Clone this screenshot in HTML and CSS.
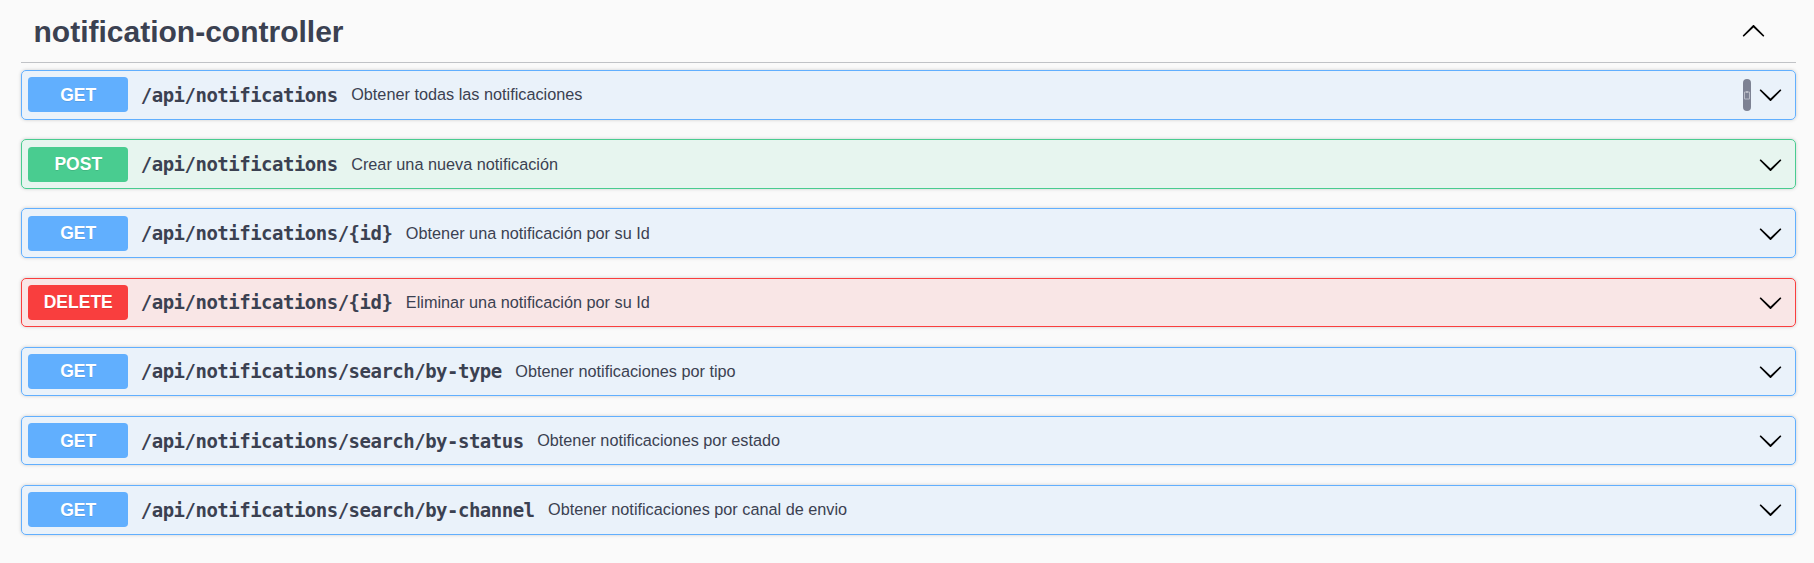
FILE: index.html
```html
<!DOCTYPE html>
<html lang="es">
<head>
<meta charset="utf-8">
<title>notification-controller</title>
<link rel="stylesheet" href="styles.css">
</head>
<body>
<div class="wrapper">
  <div class="tag">
    <h3 class="tag-title">notification-controller</h3>
    <svg class="tag-arrow" viewBox="0 0 20 20" width="25" height="25"><path d="M17.418 6.109c.272-.268.709-.268.979 0s.271.701 0 .969l-7.908 7.83c-.27.268-.707.268-.979 0l-7.908-7.83c-.27-.268-.27-.701 0-.969.271-.268.709-.268.979 0L10 13.25l7.418-7.141z"/></svg>
  </div>

  <div class="opblock get">
    <span class="method">GET</span>
    <span class="path">/api/notifications</span>
    <span class="desc">Obtener todas las notificaciones</span>
    <span class="copy"><svg viewBox="0 0 8 10" width="8" height="10"><path d="M1.5 2h5v7h-5z" fill="none" stroke="#b8bbc5" stroke-width="1"/><path d="M3 1h2v2H3z" fill="#b8bbc5"/></svg></span>
    <svg class="arrow" viewBox="0 0 20 20" width="25" height="25"><path d="M17.418 6.109c.272-.268.709-.268.979 0s.271.701 0 .969l-7.908 7.83c-.27.268-.707.268-.979 0l-7.908-7.830c-.27-.268-.27-.701 0-.969.271-.268.709-.268.979 0L10 13.25l7.418-7.141z"/></svg>
  </div>

  <div class="opblock post">
    <span class="method">POST</span>
    <span class="path">/api/notifications</span>
    <span class="desc">Crear una nueva notificación</span>
    <svg class="arrow" viewBox="0 0 20 20" width="25" height="25"><path d="M17.418 6.109c.272-.268.709-.268.979 0s.271.701 0 .969l-7.908 7.83c-.27.268-.707.268-.979 0l-7.908-7.83c-.27-.268-.27-.701 0-.969.271-.268.709-.268.979 0L10 13.25l7.418-7.141z"/></svg>
  </div>

  <div class="opblock get">
    <span class="method">GET</span>
    <span class="path">/api/notifications/{id}</span>
    <span class="desc">Obtener una notificación por su Id</span>
    <svg class="arrow" viewBox="0 0 20 20" width="25" height="25"><path d="M17.418 6.109c.272-.268.709-.268.979 0s.271.701 0 .969l-7.908 7.83c-.27.268-.707.268-.979 0l-7.908-7.83c-.27-.268-.27-.701 0-.969.271-.268.709-.268.979 0L10 13.25l7.418-7.141z"/></svg>
  </div>

  <div class="opblock delete">
    <span class="method">DELETE</span>
    <span class="path">/api/notifications/{id}</span>
    <span class="desc">Eliminar una notificación por su Id</span>
    <svg class="arrow" viewBox="0 0 20 20" width="25" height="25"><path d="M17.418 6.109c.272-.268.709-.268.979 0s.271.701 0 .969l-7.908 7.83c-.27.268-.707.268-.979 0l-7.908-7.83c-.27-.268-.27-.701 0-.969.271-.268.709-.268.979 0L10 13.25l7.418-7.141z"/></svg>
  </div>

  <div class="opblock get">
    <span class="method">GET</span>
    <span class="path">/api/notifications/search/by-type</span>
    <span class="desc">Obtener notificaciones por tipo</span>
    <svg class="arrow" viewBox="0 0 20 20" width="25" height="25"><path d="M17.418 6.109c.272-.268.709-.268.979 0s.271.701 0 .969l-7.908 7.83c-.27.268-.707.268-.979 0l-7.908-7.83c-.27-.268-.27-.701 0-.969.271-.268.709-.268.979 0L10 13.25l7.418-7.141z"/></svg>
  </div>

  <div class="opblock get">
    <span class="method">GET</span>
    <span class="path">/api/notifications/search/by-status</span>
    <span class="desc">Obtener notificaciones por estado</span>
    <svg class="arrow" viewBox="0 0 20 20" width="25" height="25"><path d="M17.418 6.109c.272-.268.709-.268.979 0s.271.701 0 .969l-7.908 7.83c-.27.268-.707.268-.979 0l-7.908-7.83c-.27-.268-.27-.701 0-.969.271-.268.709-.268.979 0L10 13.25l7.418-7.141z"/></svg>
  </div>

  <div class="opblock get">
    <span class="method">GET</span>
    <span class="path">/api/notifications/search/by-channel</span>
    <span class="desc">Obtener notificaciones por canal de envio</span>
    <svg class="arrow" viewBox="0 0 20 20" width="25" height="25"><path d="M17.418 6.109c.272-.268.709-.268.979 0s.271.701 0 .969l-7.908 7.83c-.27.268-.707.268-.979 0l-7.908-7.83c-.27-.268-.27-.701 0-.969.271-.268.709-.268.979 0L10 13.25l7.418-7.141z"/></svg>
  </div>
</div>
</body>
</html>
```

FILE: styles.css
```css
html, body {
  margin: 0;
  padding: 0;
  background: #fafafa;
}

.wrapper {
  padding: 2px 18px 0 21px;
  font-family: "Liberation Sans", Arial, sans-serif;
  color: #3b4151;
}

.tag {
  display: flex;
  align-items: center;
  padding: 12.5px 30px 12.5px 12.5px;
  border-bottom: 1px solid rgba(59, 65, 81, 0.3);
  margin: 0 0 7.6px;
}

.tag-title {
  flex: 1;
  margin: 0;
  font-size: 30px;
  font-weight: 700;
  line-height: 34.5px;
  color: #3b4151;
}

.tag-arrow {
  display: block;
  fill: #000;
  transform: rotate(180deg);
}

.opblock {
  display: flex;
  align-items: center;
  padding: 6.25px;
  margin: 0 0 19.67px;
  border: 1px solid #61affe;
  border-radius: 5px;
  box-shadow: 0 0 3.75px rgba(0, 0, 0, 0.19);
  background: rgba(97, 175, 254, 0.1);
}

.opblock.post {
  border-color: #49cc90;
  background: rgba(73, 204, 144, 0.1);
}

.opblock.delete {
  border-color: #f93e3e;
  background: rgba(249, 62, 62, 0.1);
}

.method {
  min-width: 100px;
  padding: 7.5px 0;
  line-height: 20px;
  font-size: 17.5px;
  font-weight: 700;
  text-align: center;
  color: #fff;
  border-radius: 3.75px;
  background: #61affe;
  text-shadow: 0 1px 0 rgba(0, 0, 0, 0.1);
}

.post .method { background: #49cc90; }
.delete .method { background: #f93e3e; }

.path {
  padding: 0 12.5px;
  font-family: "DejaVu Sans Mono", monospace;
  font-size: 19px;
  font-weight: 700;
  letter-spacing: -0.5px;
  color: #3b4151;
  white-space: nowrap;
}

.desc {
  flex: 1;
  padding-left: 1px;
  font-size: 16.25px;
  color: #3b4151;
}

.copy {
  display: flex;
  align-items: center;
  justify-content: center;
  overflow: hidden;
  width: 8px;
  height: 32px;
  border-radius: 4px;
  background: #7d8293;
  margin-right: 7px;
}

.copy svg {
  flex: none;
}

.arrow {
  display: block;
  margin-right: 5.75px;
  fill: #000;
}
```
